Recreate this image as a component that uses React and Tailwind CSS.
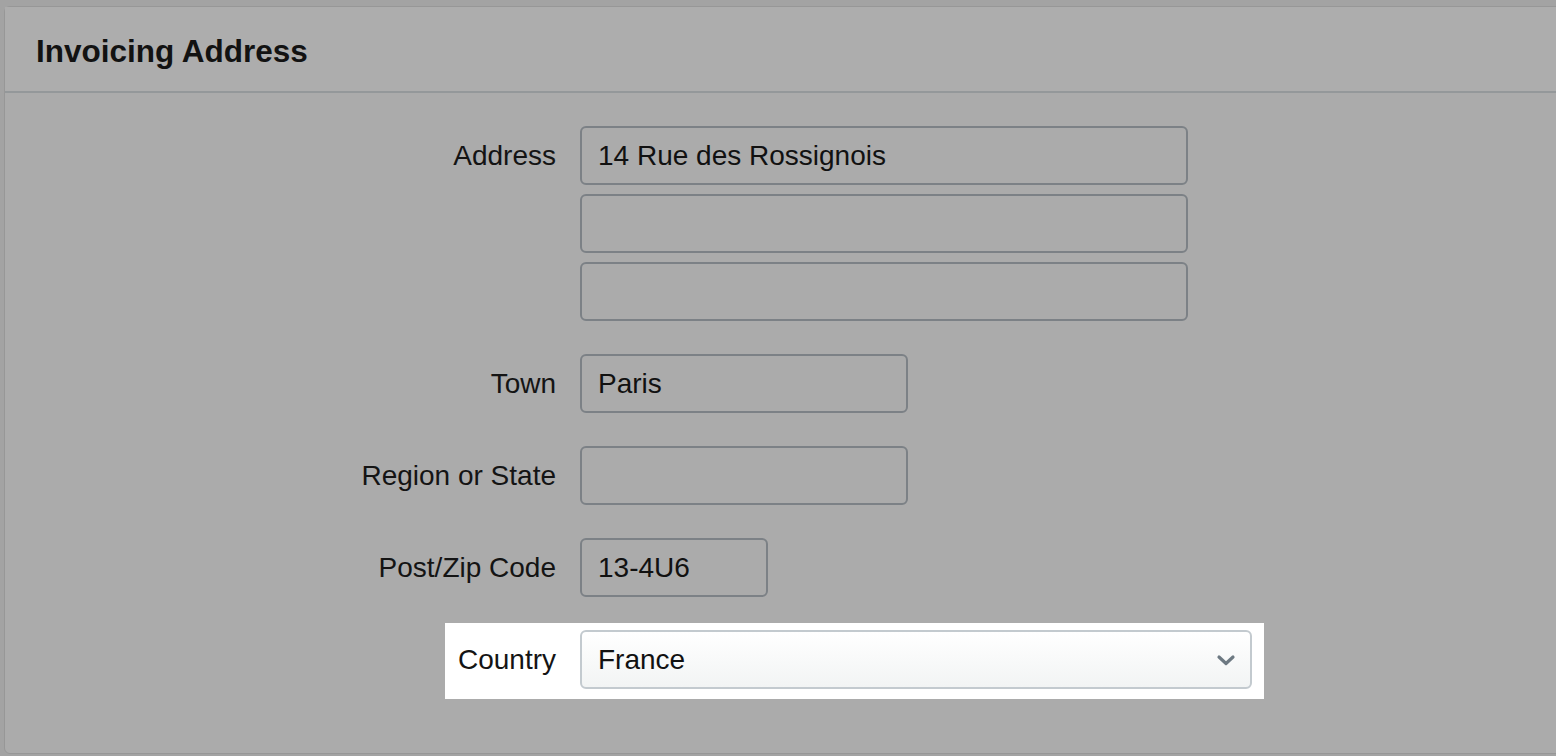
const font = { fontFamily: '"Liberation Sans", Arial, sans-serif' }

function Field({ value, width }) {
  return (
    <div
      className="flex h-[59px] items-center rounded-[6px] border-2 border-[#7c8186] pl-[16px] text-[28px] text-[#111]"
      style={{ width }}
    >
      {value}
    </div>
  )
}

function Row({ label, children }) {
  return (
    <div className="flex items-start gap-[24px]">
      <div className="flex h-[59px] w-[551px] items-center justify-end text-[28px] text-[#141414]">{label}</div>
      <div className="flex flex-col gap-[9px]">{children}</div>
    </div>
  )
}

export default function App() {
  return (
    <div className="h-[756px] w-[1556px] overflow-hidden bg-[#a3a3a3] pl-[4px] pt-[6px]" style={font}>
      <div className="h-[748px] w-[1580px] rounded-l-[6px] border border-[#979797] bg-[#ababab]">
        <div className="flex h-[86px] items-center border-b-2 border-[#94989a] bg-[#adadad] pl-[31px] pt-[5px]">
          <h2 className="text-[31.5px] font-bold text-[#121212]">Invoicing Address</h2>
        </div>
        <div className="flex flex-col gap-[33px] pt-[33px]">
          <Row label="Address">
            <Field value="14 Rue des Rossignois" width={608} />
            <Field value="" width={608} />
            <Field value="" width={608} />
          </Row>
          <Row label="Town">
            <Field value="Paris" width={328} />
          </Row>
          <Row label="Region or State">
            <Field value="" width={328} />
          </Row>
          <Row label="Post/Zip Code">
            <Field value="13-4U6" width={188} />
          </Row>
          <div className="-mt-[7px] flex">
            <div className="w-[440px]" />
            <div className="flex items-center gap-[24px] bg-white pb-[10px] pl-[12px] pr-[12px] pt-[7px]">
              <div className="w-[99px] text-right text-[28px] text-[#141414]">Country</div>
              <div className="flex h-[59px] w-[672px] items-center justify-between rounded-[6px] border-2 border-[#c3cacf] bg-gradient-to-b from-white to-[#f2f4f4] pl-[16px] pr-[14px] text-[28px] text-[#111]">
                <span>France</span>
                <svg width="20" height="14" viewBox="0 0 20 14" fill="none">
                  <path d="M3 4 L10 10.5 L17 4" stroke="#6d7982" strokeWidth="3.2" strokeLinecap="round" strokeLinejoin="round" />
                </svg>
              </div>
            </div>
          </div>
        </div>
      </div>
    </div>
  )
}
